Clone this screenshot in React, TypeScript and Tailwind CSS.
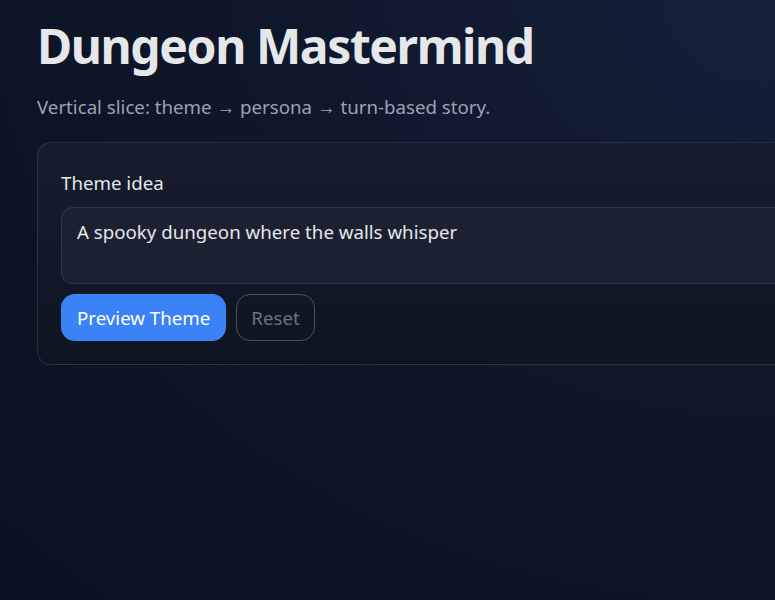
export default function App() {
  return (
    <div
      className="min-h-screen w-full overflow-hidden bg-[radial-gradient(ellipse_at_top_right,#15203a_0%,#0f172a_45%,#0b1120_100%)] text-[#e5e7eb]"
      style={{ fontFamily: '"Noto Sans", "Open Sans", sans-serif' }}
    >
      <div className="w-[1000px] px-[37px] pt-[17px]">
        <h1 className="text-[48px] font-bold leading-[1.2] tracking-[-1.4px] text-[#e5e7eb]">
          Dungeon Mastermind
        </h1>
        <p className="mt-[18px] text-[18.7px] leading-[28px] text-[#9ca3af]">
          Vertical slice: theme → persona → turn-based story.
        </p>

        <div className="mt-[21px] rounded-[14px] border border-white/10 bg-gradient-to-b from-[#161d2e] to-[#0f1422] px-[23px] pt-[26px] pb-[23px]">
          <label className="block text-[18.7px] leading-[28px] text-[#e5e7eb]">Theme idea</label>
          <textarea
            className="mt-[10px] block h-[77px] w-full resize-none rounded-[12px] border border-white/10 bg-[#1c2131] px-[15px] py-[10px] text-[18.7px] leading-[28px] text-[#e5e7eb] outline-none"
            defaultValue="A spooky dungeon where the walls whisper"
          />
          <div className="mt-[10px] flex gap-[10px]">
            <button className="h-[47px] rounded-[14px] bg-[#3b82f6] px-[16px] pt-[2px] text-[18.7px] text-white">
              Preview Theme
            </button>
            <button
              disabled
              className="h-[47px] rounded-[14px] border border-white/25 px-[14px] pt-[2px] text-[18.7px] text-[#6b7280]"
            >
              Reset
            </button>
          </div>
        </div>
      </div>
    </div>
  );
}
